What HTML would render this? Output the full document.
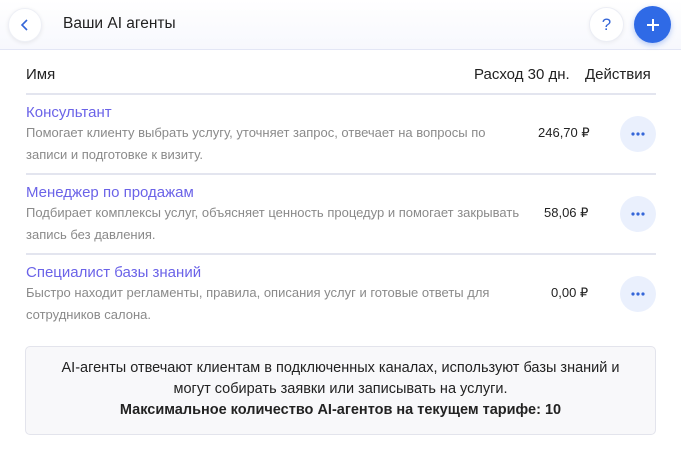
<!DOCTYPE html><html><head><meta charset="utf-8"><style>
*{box-sizing:border-box;margin:0;padding:0}
body{width:681px;height:462px;background:#fff;font-family:"Liberation Sans",sans-serif;position:relative;overflow:hidden;color:#222}
.hdr{position:absolute;left:0;top:0;width:681px;height:50px;background:linear-gradient(#fff,#f7f8fd);border-bottom:1px solid #e3e6f5}
.circ{position:absolute;border-radius:50%;display:flex;align-items:center;justify-content:center}
.abs{position:absolute;white-space:nowrap}
.t{font-size:15px;color:#6b63e8}
.d{font-size:13px;color:#8a8a8a;line-height:22px;white-space:normal;width:478px}
.p{font-size:13px;color:#222}
.hr{position:absolute;left:26px;width:630px;height:2px;background:#e3e5ef}
.dots{width:36px;height:36px;background:#eaf0fd;left:620px}
</style></head><body>
<div class="hdr"></div>
<div class="circ" style="left:8px;top:8px;width:34px;height:34px;background:#fff;box-shadow:0 1px 4px rgba(0,0,0,.08);border:1px solid #eef0f6"><svg width="12" height="14"><path d="M8 2L3 7L8 12" stroke="#3566d8" stroke-width="1.6" fill="none"/></svg></div>
<div class="abs" style="left:63px;top:15px;font-size:15.5px;color:#222">Ваши AI агенты</div>
<div class="circ" style="left:589px;top:7px;width:35px;height:35px;background:#fff;border:1px solid #eceef5;box-shadow:0 1px 4px rgba(0,0,0,.06);color:#3566d8;font-size:17px">?</div>
<div class="circ" style="left:634px;top:6px;width:37px;height:37px;background:#2f6ae6;color:#fff;box-shadow:0 2px 6px rgba(47,106,230,.35)"><svg width="14" height="14"><path d="M7 1V13M1 7H13" stroke="#fff" stroke-width="2"/></svg></div>
<div class="abs" style="left:26px;top:66px;font-size:15px">Имя</div>
<div class="abs" style="left:474px;top:66px;font-size:15px">Расход 30 дн.</div>
<div class="abs" style="left:585px;top:66px;font-size:15px">Действия</div>
<div class="hr" style="top:93px"></div>

<div class="abs t" style="left:26px;top:104px">Консультант</div>
<div class="abs d" style="left:26px;top:122px">Помогает клиенту выбрать услугу, уточняет запрос, отвечает на вопросы по записи и подготовке к визиту.</div>
<div class="abs p" style="left:538px;top:125px">246,70 ₽</div>
<div class="circ dots" style="top:116px"><svg width="14" height="4"><circle cx="2" cy="2" r="1.6" fill="#3566d8"/><circle cx="7" cy="2" r="1.6" fill="#3566d8"/><circle cx="12" cy="2" r="1.6" fill="#3566d8"/></svg></div>
<div class="hr" style="top:173px"></div>

<div class="abs t" style="left:26px;top:184px">Менеджер по продажам</div>
<div class="abs d" style="left:26px;top:202px;width:500px">Подбирает комплексы услуг, объясняет ценность процедур и помогает закрывать запись без давления.</div>
<div class="abs p" style="left:544px;top:205px">58,06 ₽</div>
<div class="circ dots" style="top:196px"><svg width="14" height="4"><circle cx="2" cy="2" r="1.6" fill="#3566d8"/><circle cx="7" cy="2" r="1.6" fill="#3566d8"/><circle cx="12" cy="2" r="1.6" fill="#3566d8"/></svg></div>
<div class="hr" style="top:253px"></div>

<div class="abs t" style="left:26px;top:264px">Специалист базы знаний</div>
<div class="abs d" style="left:26px;top:282px">Быстро находит регламенты, правила, описания услуг и готовые ответы для сотрудников салона.</div>
<div class="abs p" style="left:551px;top:285px">0,00 ₽</div>
<div class="circ dots" style="top:276px"><svg width="14" height="4"><circle cx="2" cy="2" r="1.6" fill="#3566d8"/><circle cx="7" cy="2" r="1.6" fill="#3566d8"/><circle cx="12" cy="2" r="1.6" fill="#3566d8"/></svg></div>

<div style="position:absolute;left:25px;top:346px;width:631px;height:89px;background:#f8f8fa;border:1px solid #e3e4ec;border-radius:5px;text-align:center;font-size:14.5px;line-height:21px;padding-top:11px;color:#222">AI-агенты отвечают клиентам в подключенных каналах, используют базы знаний и<br>могут собирать заявки или записывать на услуги.<br><b>Максимальное количество AI-агентов на текущем тарифе: 10</b></div>
</body></html>
